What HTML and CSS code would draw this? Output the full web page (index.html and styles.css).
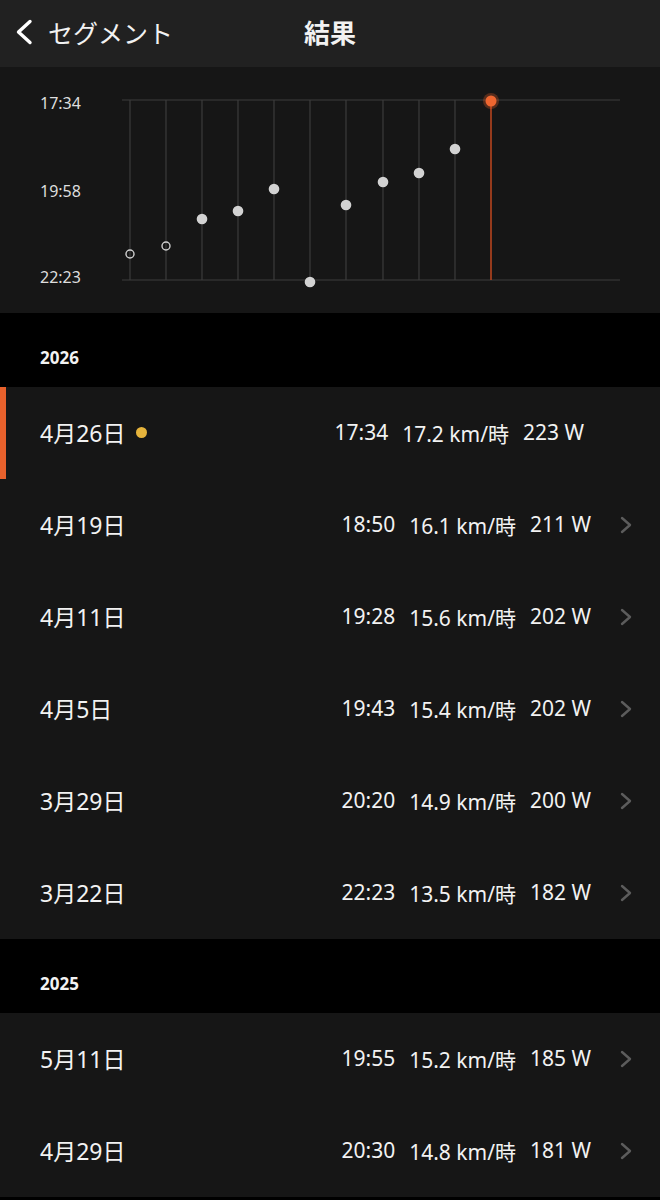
FILE: index.html
```html
<!DOCTYPE html>
<html lang="ja">
<head>
    <meta charset="UTF-8">
    <meta name="viewport" content="width=device-width, initial-scale=1.0">
    <title>結果</title>
    <link rel="stylesheet" href="styles.css">
</head>
<body>
    <header class="nav-bar">
        <a href="#" class="back-link">
            <svg class="back-icon" viewBox="0 0 20 26" width="20" height="26">
                <path d="M16 2.5 L4.5 13 L16 23.5" fill="none" stroke="#fff" stroke-width="3.4" stroke-linecap="round" stroke-linejoin="round"/>
            </svg>
            <span>セグメント</span>
        </a>
        <h1>結果</h1>
        <div></div>
    </header>

    <section class="chart">
        <svg viewBox="0 0 660 246" width="660" height="246">
            <g class="axis-labels">
                <text x="40" y="42">17:34</text>
                <text x="40" y="130">19:58</text>
                <text x="40" y="216">22:23</text>
            </g>
            <g stroke="#3c3c3c" stroke-width="1.2">
                <line x1="122" y1="33" x2="620" y2="33"/>
                <line x1="122" y1="213" x2="620" y2="213"/>
                <line x1="130" y1="33" x2="130" y2="213"/>
                <line x1="166" y1="33" x2="166" y2="213"/>
                <line x1="202" y1="33" x2="202" y2="213"/>
                <line x1="238" y1="33" x2="238" y2="213"/>
                <line x1="274" y1="33" x2="274" y2="213"/>
                <line x1="310" y1="33" x2="310" y2="213"/>
                <line x1="346" y1="33" x2="346" y2="213"/>
                <line x1="383" y1="33" x2="383" y2="213"/>
                <line x1="419" y1="33" x2="419" y2="213"/>
                <line x1="455" y1="33" x2="455" y2="213"/>
            </g>
            <line x1="491" y1="34" x2="491" y2="213" stroke="#b7451f" stroke-width="1.6"/>
            <g fill="none" stroke="#cfcfcf" stroke-width="1.4">
                <circle cx="130" cy="187" r="4"/>
                <circle cx="166" cy="179" r="4"/>
            </g>
            <g fill="#d2d2d2">
                <circle cx="202" cy="152" r="5.3"/>
                <circle cx="238" cy="144" r="5.3"/>
                <circle cx="274" cy="122" r="5.3"/>
                <circle cx="310" cy="215" r="5.3"/>
                <circle cx="346" cy="138" r="5.3"/>
                <circle cx="383" cy="115" r="5.3"/>
                <circle cx="419" cy="106" r="5.3"/>
                <circle cx="455" cy="82" r="5.3"/>
            </g>
            <circle cx="491" cy="34" r="8" fill="#e8612c" opacity="0.3"/>
            <circle cx="491" cy="34" r="5.5" fill="#ee6630"/>
        </svg>
    </section>

    <div class="year-header">2026</div>
    <ul class="results">
        <li class="result-row is-current">
            <span class="date">4月26日<i class="new-dot"></i></span>
            <span class="metrics"><span>17:34</span><span>17.2 km/時</span><span>223 W</span></span>
        </li>
        <li class="result-row">
            <span class="date">4月19日</span>
            <span class="metrics"><span>18:50</span><span>16.1 km/時</span><span>211 W</span></span>
            <svg class="chevron" viewBox="0 0 12 18" width="12" height="18"><path d="M2 2 L10 9 L2 16" fill="none" stroke="#5c5c5c" stroke-width="2.4" stroke-linecap="round" stroke-linejoin="round"/></svg>
        </li>
        <li class="result-row">
            <span class="date">4月11日</span>
            <span class="metrics"><span>19:28</span><span>15.6 km/時</span><span>202 W</span></span>
            <svg class="chevron" viewBox="0 0 12 18" width="12" height="18"><path d="M2 2 L10 9 L2 16" fill="none" stroke="#5c5c5c" stroke-width="2.4" stroke-linecap="round" stroke-linejoin="round"/></svg>
        </li>
        <li class="result-row">
            <span class="date">4月5日</span>
            <span class="metrics"><span>19:43</span><span>15.4 km/時</span><span>202 W</span></span>
            <svg class="chevron" viewBox="0 0 12 18" width="12" height="18"><path d="M2 2 L10 9 L2 16" fill="none" stroke="#5c5c5c" stroke-width="2.4" stroke-linecap="round" stroke-linejoin="round"/></svg>
        </li>
        <li class="result-row">
            <span class="date">3月29日</span>
            <span class="metrics"><span>20:20</span><span>14.9 km/時</span><span>200 W</span></span>
            <svg class="chevron" viewBox="0 0 12 18" width="12" height="18"><path d="M2 2 L10 9 L2 16" fill="none" stroke="#5c5c5c" stroke-width="2.4" stroke-linecap="round" stroke-linejoin="round"/></svg>
        </li>
        <li class="result-row">
            <span class="date">3月22日</span>
            <span class="metrics"><span>22:23</span><span>13.5 km/時</span><span>182 W</span></span>
            <svg class="chevron" viewBox="0 0 12 18" width="12" height="18"><path d="M2 2 L10 9 L2 16" fill="none" stroke="#5c5c5c" stroke-width="2.4" stroke-linecap="round" stroke-linejoin="round"/></svg>
        </li>
    </ul>

    <div class="year-header">2025</div>
    <ul class="results">
        <li class="result-row">
            <span class="date">5月11日</span>
            <span class="metrics"><span>19:55</span><span>15.2 km/時</span><span>185 W</span></span>
            <svg class="chevron" viewBox="0 0 12 18" width="12" height="18"><path d="M2 2 L10 9 L2 16" fill="none" stroke="#5c5c5c" stroke-width="2.4" stroke-linecap="round" stroke-linejoin="round"/></svg>
        </li>
        <li class="result-row">
            <span class="date">4月29日</span>
            <span class="metrics"><span>20:30</span><span>14.8 km/時</span><span>181 W</span></span>
            <svg class="chevron" viewBox="0 0 12 18" width="12" height="18"><path d="M2 2 L10 9 L2 16" fill="none" stroke="#5c5c5c" stroke-width="2.4" stroke-linecap="round" stroke-linejoin="round"/></svg>
        </li>
    </ul>
</body>
</html>
```

FILE: styles.css
```css
:root {
    --bar-color: #212121;
    --panel-color: #161616;
    --accent-color: #e8612c;
    --text-color: #f2f2f2;
}

* {
    box-sizing: border-box;
    margin: 0;
    padding: 0;
}

body {
    font-family: 'Noto Sans', 'Noto Sans CJK JP', sans-serif;
    background-color: #000;
    color: var(--text-color);
    width: 660px;
    overflow: hidden;
}

.nav-bar {
    display: grid;
    grid-template-columns: 1fr auto 1fr;
    align-items: center;
    height: 67px;
    padding-bottom: 4px;
    background-color: var(--bar-color);
}

.back-link {
    display: flex;
    align-items: center;
    gap: 14px;
    padding-left: 14px;
    color: var(--text-color);
    text-decoration: none;
    font-size: 25px;
}

.back-icon {
    display: block;
}

h1 {
    font-size: 26px;
    font-weight: bold;
}

.chart {
    height: 246px;
    background-color: var(--panel-color);
}

.chart svg {
    display: block;
}

.axis-labels text {
    fill: #dedede;
    font-size: 16px;
    font-family: 'Noto Sans', sans-serif;
}

.year-header {
    height: 74px;
    padding: 35px 0 0 40px;
    font-size: 17px;
    font-weight: bold;
    line-height: 20px;
}

.results {
    list-style: none;
    background-color: var(--panel-color);
}

.result-row {
    position: relative;
    display: flex;
    align-items: center;
    height: 92px;
    padding: 0 28px 0 40px;
}

.result-row.is-current::before {
    content: '';
    position: absolute;
    left: 0;
    top: 0;
    bottom: 0;
    width: 6px;
    background-color: var(--accent-color);
}

.result-row.is-current .metrics {
    margin-right: 48px;
}

.date {
    display: flex;
    align-items: center;
    font-size: 23px;
    padding-bottom: 2px;
}

.new-dot {
    width: 11px;
    height: 11px;
    margin-left: 11px;
    border-radius: 50%;
    background-color: #e6b43c;
}

.metrics {
    display: flex;
    gap: 14px;
    margin-left: auto;
    font-size: 21px;
}

.chevron {
    display: block;
    margin-left: 29px;
}
```
